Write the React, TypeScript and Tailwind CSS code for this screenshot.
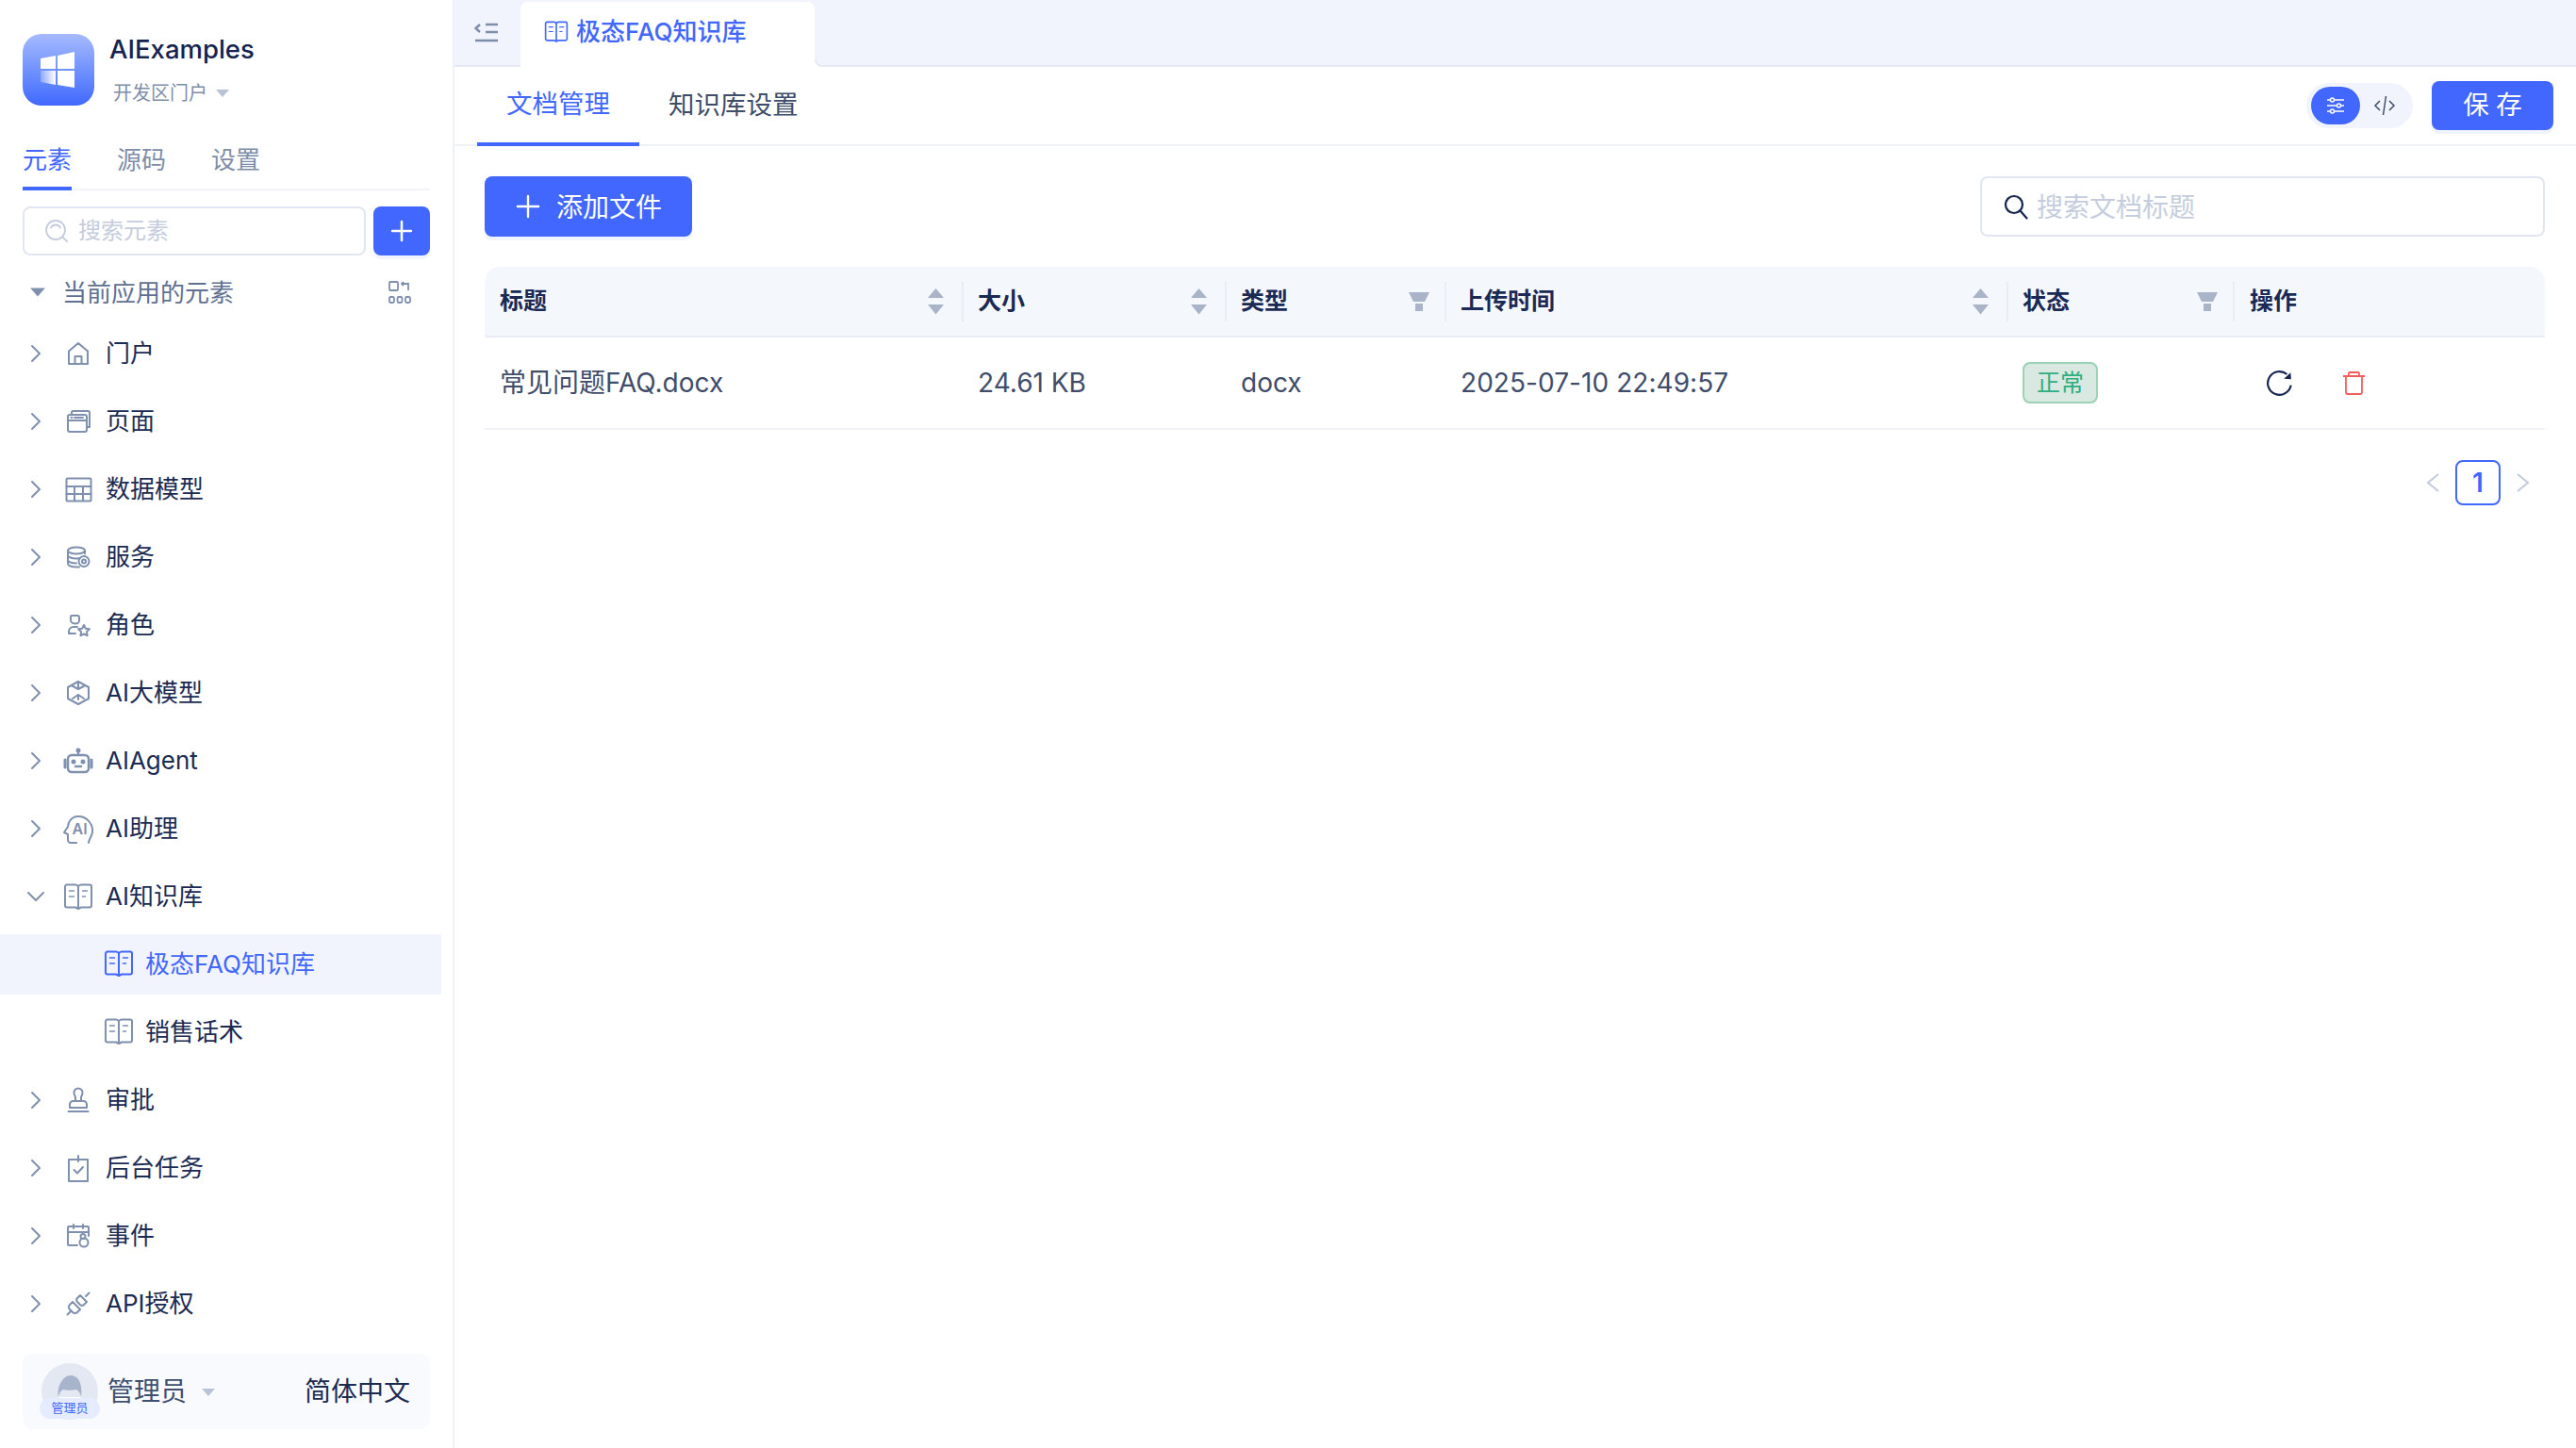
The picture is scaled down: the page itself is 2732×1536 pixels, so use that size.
import { ChevronDown, ChevronRight, Plus } from 'lucide-react';
import type { ReactNode } from 'react';

const Svg = ({ w, h, children, className = 'text-[#7f90ae]' }: { w: number; h: number; children: ReactNode; className?: string }) => (
  <svg width={w} height={h} viewBox={`0 0 ${w} ${h}`} fill="none" stroke="currentColor" strokeWidth={2} strokeLinejoin="round" strokeLinecap="round" className={className}>
    {children}
  </svg>
);

const HomeIcon = () => (
  <Svg w={24} h={26}>
    <path d="M2 24V10.5L12 2l10 8.500V24zM8.500 24v-8h7v8" />
  </Svg>
);
const PageIcon = () => (
  <Svg w={27} h={26}>
    <path d="M6 6V3.500A1.500 1.500 0 0 1 7.500 2h16A1.500 1.500 0 0 1 25 3.500V19h-3" />
    <rect x={2} y={6} width={20} height={18} rx={2} />
    <path d="M2 12h20M5.500 9h1M9 9h9" />
  </Svg>
);
const TableIcon = () => (
  <Svg w={29} h={27}>
    <rect x={1.500} y={1.500} width={26} height={24} rx={1} />
    <path d="M1.500 10h26M1.500 18h26M10 10v15M19 10v15" />
  </Svg>
);
const ServiceIcon = () => (
  <Svg w={26} h={24}>
    <ellipse cx={11} cy={5} rx={9} ry={3.500} />
    <path d="M2 5v14c0 2 4 3.500 9 3.500h3M2 10c0 2 4 3.500 9 3.500 1.500 0 3-.2 4-.5M2 15c0 2 4 3.500 9 3.500M20 8.500V5" />
    <circle cx={19} cy={16.500} r={5.500} />
    <circle cx={19} cy={16.500} r={2} />
  </Svg>
);
const RoleIcon = () => (
  <Svg w={25} h={25}>
    <path d="M5 2h6a2 2 0 0 1 2 2v3a3.500 3.500 0 0 1-3.500 3.500H8A4 4 0 0 1 4 6.500V3a1 1 0 0 1 1-1z" />
    <path d="M2 21v-2.500A5 5 0 0 1 7 14h4M2 21h7" />
    <path d="m18 12 1.800 3.700 4.100.6-3 2.900.7 4.100-3.600-1.900-3.600 1.900.7-4.100-3-2.900 4.100-.6z" />
  </Svg>
);
const CubeIcon = () => (
  <Svg w={26} h={28}>
    <path d="M13 2 24 8v12l-11 6-11-6V8zM13 3v7M6.500 6.500 13 10l6.500-3.500M13 16v5M13 16l-6 4M13 16l6 4" />
  </Svg>
);
const RobotIcon = () => (
  <Svg w={32} h={28}>
    <circle cx={16} cy={3} r={1.500} fill="currentColor" />
    <path d="M16 4v4" />
    <rect x={5} y={8} width={22} height={18} rx={4} strokeWidth={2.500} />
    <path d="M2 13v8M30 13v8" strokeWidth={3} />
    <path d="M13 20h6" strokeWidth={2.500} />
    <circle cx={11} cy={15} r={1.500} fill="currentColor" />
    <circle cx={21} cy={15} r={1.500} fill="currentColor" />
  </Svg>
);
const AssistantIcon = () => (
  <Svg w={32} h={31}>
    <path d="M27 30c0-3 3-6 4-11 1-9-6-17-15-17C9 2 5 8 5 13L1 19l4 2v6c0 1 1 3 3 3h6v1" />
    <text x={9.500} y={21} fontSize={16} fontWeight={600} fill="currentColor" stroke="none" fontFamily="Inter, sans-serif">AI</text>
  </Svg>
);
const BookIcon = ({ className }: { className?: string }) => (
  <svg width={32} height={28} viewBox="0 0 32 28" fill="none" stroke="currentColor" strokeWidth={2} strokeLinejoin="round" strokeLinecap="round" className={className}>
    <path d="M4 1.500h9c1.500 0 2.500.7 3 2 .5-1.300 1.500-2 3-2h9a2 2 0 0 1 2 2v20a2 2 0 0 1-2 2h-9l-3 1.500-3-1.500H4a2 2 0 0 1-2-2v-20a2 2 0 0 1 2-2zM16 3.500v22" />
    <path d="M6.500 8h5M6.500 14h5M20.500 8h5M20.500 14h3" strokeWidth={1.500} />
  </svg>
);
const StampIcon = () => (
  <Svg w={24} h={28}>
    <path d="M1.500 26h21M9 15V11c0-1-1.500-2-1.500-5a4.500 4.500 0 0 1 9 0c0 3-1.500 4-1.500 5v4M3 22v-3.500A3.500 3.500 0 0 1 6.500 15h11a3.500 3.500 0 0 1 3.500 3.500V22z" />
  </Svg>
);
const TaskIcon = () => (
  <Svg w={24} h={30}>
    <path d="M2 6h20v23H2zM12 2v6M7.500 17l3.500 3.500 6-6.500" />
  </Svg>
);
const EventIcon = () => (
  <Svg w={26} h={26}>
    <path d="M12 23H3a1 1 0 0 1-1-1V4a1 1 0 0 1 1-1h20a1 1 0 0 1 1 1v9M2 9h22M8 1v4M18 1v4" />
    <circle cx={18} cy={13.500} r={2.500} />
    <circle cx={19} cy={20} r={4.500} />
  </Svg>
);
const PlugIcon = () => (
  <Svg w={26} h={26}>
    <path d="m1.500 24.500 4-4M21 5l3.500-3.500" />
    <path d="m15 4 7 7-3 3a3 3 0 0 1-4 0l-3-3a3 3 0 0 1 0-4z" />
    <path d="m7 11 8 8-3 3a3.500 3.500 0 0 1-5 0l-3-3a3.500 3.500 0 0 1 0-5z" />
  </Svg>
);

const Caret = ({ className }: { className: string }) => (
  <svg width={16} height={10} viewBox="0 0 16 10" className={className}>
    <path d="M1 1h14L8 9z" fill="currentColor" />
  </svg>
);

const SortIcon = () => (
  <svg width={19} height={28} viewBox="0 0 19 28" fill="#a9b4c8" className="mr-[2px]">
    <path d="M9.500 0 18 10H1zM1 17h17l-8.500 10.500z" />
  </svg>
);
const FilterIcon = () => (
  <svg width={22} height={20} viewBox="0 0 22 20" fill="#a9b4c8">
    <path d="M0 0h22l-5 10H5zM7 12h8v8H7z" />
  </svg>
);

const items: { label: string; icon: ReactNode }[] = [
  { label: '门户', icon: <HomeIcon /> },
  { label: '页面', icon: <PageIcon /> },
  { label: '数据模型', icon: <TableIcon /> },
  { label: '服务', icon: <ServiceIcon /> },
  { label: '角色', icon: <RoleIcon /> },
  { label: 'AI大模型', icon: <CubeIcon /> },
  { label: 'AIAgent', icon: <RobotIcon /> },
  { label: 'AI助理', icon: <AssistantIcon /> },
];
const lowerItems: { label: string; icon: ReactNode }[] = [
  { label: '审批', icon: <StampIcon /> },
  { label: '后台任务', icon: <TaskIcon /> },
  { label: '事件', icon: <EventIcon /> },
  { label: 'API授权', icon: <PlugIcon /> },
];

function TreeRow({ label, icon, open }: { label: string; icon: ReactNode; open?: boolean }) {
  return (
    <div className="py-1">
      <div className="flex h-16 items-center pl-6">
        <div className="flex w-7 justify-center">
          {open ? <ChevronDown size={32} strokeWidth={1.500} className="shrink-0 text-[#7f90ae]" /> : <ChevronRight size={32} strokeWidth={1.500} className="shrink-0 text-[#7f90ae]" />}
        </div>
        <div className="ml-3 flex w-[38px] justify-center">{icon}</div>
        <span className="-mt-[2px] ml-[10px] text-[26px] text-[#1c2b52]">{label}</span>
      </div>
    </div>
  );
}

function ChildRow({ label, active }: { label: string; active?: boolean }) {
  return (
    <div className="py-1">
      <div className={`flex h-16 items-center pl-[110px] ${active ? 'bg-[#f1f4fd]' : ''}`}>
        <BookIcon className={active ? '-mt-[2px] text-[#4167ff]' : '-mt-[2px] text-[#7f90ae]'} />
        <span className={`-mt-[2px] ml-3 text-[26px] ${active ? 'text-[#4167ff]' : 'text-[#1c2b52]'}`}>{label}</span>
      </div>
    </div>
  );
}

function Sidebar() {
  return (
    <aside className="flex h-full w-[482px] shrink-0 flex-col border-r-2 border-[#eef1f7] pt-9">
      <div className="flex h-[76px] gap-4 px-6">
        <div className="flex h-[76px] w-[76px] items-center justify-center rounded-[20px] bg-gradient-to-b from-[#a6b9ff] to-[#4167ff]">
          <svg width={76} height={76} viewBox="0 0 76 76">
            <defs>
              <linearGradient id="pane" x1="0" y1="0" x2="1" y2="0">
                <stop offset="0" stopColor="#fff" stopOpacity="0.25" />
                <stop offset="1" stopColor="#fff" />
              </linearGradient>
            </defs>
            <path d="M19 26l16-3v14H19zM37 23l18-4v18H37zM37 39h18v18l-18-3z" fill="#fff" />
            <path d="M19 39h16v15l-16-3z" fill="url(#pane)" />
          </svg>
        </div>
        <div className="flex flex-col">
          <span className="-mt-[1px] text-[27.500px] leading-[34px] font-medium text-[#14244f]">AIExamples</span>
          <div className="mt-[16px] ml-1 flex items-center gap-2">
            <span className="text-[20px] leading-7 text-[#7f8ea8]">开发区门户</span>
            <Caret className="text-[#b9c3d8]" />
          </div>
        </div>
      </div>

      <div className="mx-6 mt-[34px] flex h-[56px] gap-[48px] border-b-2 border-[#eff2f7]">
        <div className="-mb-[2px] h-[56px] border-b-4 border-[#4167ff] pt-[6px] text-[26px] leading-9 text-[#4167ff]">元素</div>
        <div className="pt-[6px] text-[26px] leading-9 text-[#7f8ea8]">源码</div>
        <div className="pt-[6px] text-[26px] leading-9 text-[#7f8ea8]">设置</div>
      </div>

      <div className="mx-6 mt-[17px] flex h-[52px] gap-2">
        <div className="flex w-[364px] items-center rounded-lg border-2 border-[#e2e6f0] pl-[21px]">
          <svg width={26} height={26} viewBox="0 0 26 26" fill="none" stroke="#c5cddd" strokeWidth={1.800} strokeLinecap="round">
            <circle cx={12} cy={12} r={10} />
            <path d="M19.500 19.500 24 24M7 9.500C8 7.500 10 6.500 12 6.500s4 1 5 3" />
          </svg>
          <span className="ml-[10px] text-[24px] text-[#c5cddd]">搜索元素</span>
        </div>
        <button className="flex w-[60px] items-center justify-center rounded-lg bg-[#4167ff] shadow-[0_4px_0_#f1f4fd]">
          <Plus size={34} strokeWidth={1.800} className="text-white" />
        </button>
      </div>

      <div className="mt-[10px] flex h-[58px] items-center pr-[44px] pl-[31px]">
        <Caret className="h-[12px] w-[18px] text-[#7f90ae]" />
        <span className="ml-[17px] text-[26px] text-[#5f7090]">当前应用的元素</span>
        <svg width={24} height={24} viewBox="0 0 24 24" fill="none" stroke="#7f90ae" strokeWidth={1.800} className="ml-auto">
          <rect x={1} y={1} width={9} height={9} rx={1} />
          <path d="M16 5l-2-2 2-2M14 3h7v7" />
          <rect x={1} y={17} width={5} height={6} rx={1.500} />
          <rect x={9.500} y={17} width={5} height={6} rx={1.500} />
          <rect x={18} y={17} width={5} height={6} rx={1.500} />
        </svg>
      </div>

      <div className="mr-3">
        {items.map((item) => (
          <TreeRow key={item.label} label={item.label} icon={item.icon} />
        ))}
        <TreeRow label="AI知识库" icon={<BookIcon className="text-[#7f90ae]" />} open />
        <ChildRow label="极态FAQ知识库" active />
        <ChildRow label="销售话术" />
        {lowerItems.map((item) => (
          <TreeRow key={item.label} label={item.label} icon={item.icon} />
        ))}
      </div>

      <div className="mx-6 mt-auto mb-5 flex h-20 items-center rounded-[10px] bg-[#f8fafd] pr-[21px] pl-5">
        <div className="relative h-[60px] w-[60px] rounded-full bg-[#e3e8f2]">
          <svg width={60} height={60} viewBox="0 0 60 60" className="absolute top-0 left-0">
            <path d="M18 36h24v12H18z" fill="#fff" />
            <path d="M18 36c-2-10 4-23 13-23 8 0 13 9 11 23-1-5-3-7-5-8-4 1-11 1-14 0-2 1-4 3-5 8z" fill="#a8b4cc" />
          </svg>
          <div className="absolute top-[37px] -left-[2px] flex h-[22px] w-[64px] items-center justify-center rounded-full bg-[#e6ecff] text-[13px] text-[#4167ff]">管理员</div>
        </div>
        <span className="ml-[10px] text-[28px] text-[#3f4f6f]">管理员</span>
        <Caret className="mt-[2px] ml-[15px] text-[#b9c3d8]" />
        <span className="ml-auto text-[28px] text-[#1c2b52]">简体中文</span>
      </div>
    </aside>
  );
}

function TopBar() {
  return (
    <div className="flex h-[71px] shrink-0 border-b-2 border-[#e6e9f4] bg-[#f1f4fc] pl-[21px]">
      <svg width={26} height={22} viewBox="0 0 26 22" fill="none" stroke="#7f8ea8" strokeWidth={2.500} className="mt-[23px]">
        <path d="M6 3 1.500 7 6 11M12 3h13M12 11h13M1 20h24" />
      </svg>
      <div className="relative mt-[2px] -mb-[2px] ml-[23px] flex w-[312px] items-center rounded-t-lg bg-white pb-[6px] pl-[25px]">
        <BookIcon className="h-[23px] w-[26px] text-[#4167ff]" />
        <span className="ml-2 text-[26px] font-medium text-[#4167ff]">极态FAQ知识库</span>
        <div className="absolute -right-2 bottom-0 h-2 w-2 bg-white">
          <div className="h-full w-full rounded-bl-lg border-b-2 border-l-2 border-[#e6e9f4] bg-[#f1f4fc]" />
        </div>
      </div>
    </div>
  );
}

function TabBar() {
  return (
    <div className="flex h-[84px] shrink-0 items-center border-b-2 border-[#eef1f6] pr-6 pl-6">
      <div className="-mb-[2px] flex h-[84px] items-center border-b-4 border-[#4167ff] px-[31px] text-[27.500px] text-[#4167ff]">文档管理</div>
      <div className="px-[31px] text-[27.500px] text-[#3f4d68]">知识库设置</div>
      <div className="ml-auto flex h-12 w-[113px] items-center rounded-full bg-[#f1f4fc] pl-[5px]">
        <div className="flex h-10 w-[52px] items-center justify-center rounded-full bg-[#4167ff]">
          <svg width={20} height={20} viewBox="0 0 20 20" fill="none" stroke="#fff" strokeWidth={1.500}>
            <path d="M1 4h3M9 4h10M1 10h10M16 10h3M1 16h3M9 16h10" />
            <circle cx={6.500} cy={4} r={2} />
            <circle cx={13.500} cy={10} r={2} />
            <circle cx={6.500} cy={16} r={2} />
          </svg>
        </div>
        <svg width={24} height={22} viewBox="0 0 24 22" fill="none" stroke="#3f4d68" strokeWidth={1.500} className="ml-[14px]">
          <path d="M7 6l-5 5 5 5M17 6l5 5-5 5M13.500 1l-3 20" />
        </svg>
      </div>
      <button className="ml-5 h-[52px] w-[129px] rounded-lg bg-[#4167ff] text-[27.500px] text-white shadow-[0_4px_0_#f1f4fd]">保 存</button>
    </div>
  );
}

const columns = [
  { title: '标题', icon: <SortIcon /> },
  { title: '大小', icon: <SortIcon /> },
  { title: '类型', icon: <FilterIcon /> },
  { title: '上传时间', icon: <SortIcon /> },
  { title: '状态', icon: <FilterIcon /> },
];
const gridCols = 'grid grid-cols-[506px_279px_233px_596px_240px_1fr] pl-[2px]';

function FileTable() {
  return (
    <div className="mt-8">
      <div className={`${gridCols} h-[75px] items-center rounded-t-2xl border-b-2 border-[#e8edf5] bg-[#f4f7fc]`}>
        {columns.map((col, i) => (
          <div key={col.title} className={`flex h-[42px] items-center justify-between border-r-2 border-[#e9edf4] pr-4 ${i === 0 ? 'pl-[14px]' : 'pl-[15px]'}`}>
            <span className="text-[25px] font-semibold text-[#1a2a55]">{col.title}</span>
            {col.icon}
          </div>
        ))}
        <div className="pl-[16px] text-[25px] font-semibold text-[#1a2a55]">操作</div>
      </div>
      <div className={`${gridCols} h-[98px] items-center border-b-2 border-[#eef1f6] text-[28px] text-[#3f4d6b]`}>
        <div className="pl-[14px]">常见问题FAQ.docx</div>
        <div className="pl-[15px]">24.61 KB</div>
        <div className="pl-[15px]">docx</div>
        <div className="pl-[15px] tracking-[0.06px]">2025-07-10 22:49:57</div>
        <div className="pl-[15px]">
          <span className="flex h-11 w-20 items-center justify-center rounded-lg border-2 border-[#9bd1b5] bg-[#d9e8e0] pt-[2px] text-[25px] text-[#2fae7f]">正常</span>
        </div>
        <div className="flex items-center gap-[52px] pl-[33px]">
          <svg width={29} height={29} viewBox="0 0 27 27" fill="none" stroke="#14244f" strokeWidth={2}>
            <path d="M20.900 4.700A11.500 11.500 0 1 0 24.800 15.500" />
            <path d="M24.500 3l.5 6.500-7-.5z" fill="#14244f" stroke="none" />
          </svg>
          <svg width={25} height={26} viewBox="0 0 25 26" fill="none" stroke="#f25c5c" strokeWidth={1.800}>
            <path d="M1 6h23M4 6v17a2 2 0 0 0 2 2h13a2 2 0 0 0 2-2V6M7 6V3a1 1 0 0 1 1-1h9a1 1 0 0 1 1 1v3" />
          </svg>
        </div>
      </div>
    </div>
  );
}

export default function App() {
  return (
    <div className="flex h-[1536px] w-[2732px] overflow-hidden bg-white font-['Inter','Noto_Sans_CJK_SC',sans-serif]">
      <Sidebar />
      <main className="flex min-w-0 flex-1 flex-col">
        <TopBar />
        <TabBar />
        <div className="pr-[33px] pl-8">
          <div className="mt-8 flex h-16 items-center justify-between">
            <button className="flex h-16 w-[220px] items-center rounded-lg bg-[#4167ff] pl-[27px] text-[28px] text-white shadow-[0_4px_0_#f1f4fd]">
              <Plus size={38} strokeWidth={1.500} />
              <span className="mt-[2px] ml-[11px]">添加文件</span>
            </button>
            <div className="flex h-16 w-[599px] items-center rounded-lg border-2 border-[#e2e6f0] pl-[23px]">
              <svg width={26} height={27} viewBox="0 0 26 27" fill="none" stroke="#14244f" strokeWidth={2.200} strokeLinecap="round">
                <circle cx={11} cy={11} r={9} />
                <path d="M17.500 17.500 24.500 25.500" />
              </svg>
              <span className="mt-[2px] ml-[9px] text-[28px] text-[#c5cddd]">搜索文档标题</span>
            </div>
          </div>
          <FileTable />
          <div className="mt-8 flex items-center justify-end pr-4">
            <svg width={14} height={20} viewBox="0 0 14 20" fill="none" stroke="#c5cddd" strokeWidth={2.200}>
              <path d="M13 1 2 10l11 9" />
            </svg>
            <div className="mx-[17px] flex h-12 w-12 items-center justify-center rounded-lg border-2 border-[#4167ff] text-[28px] font-semibold text-[#4167ff]">1</div>
            <svg width={14} height={20} viewBox="0 0 14 20" fill="none" stroke="#c5cddd" strokeWidth={2.200}>
              <path d="m1 1 11 9-11 9" />
            </svg>
          </div>
        </div>
      </main>
    </div>
  );
}
